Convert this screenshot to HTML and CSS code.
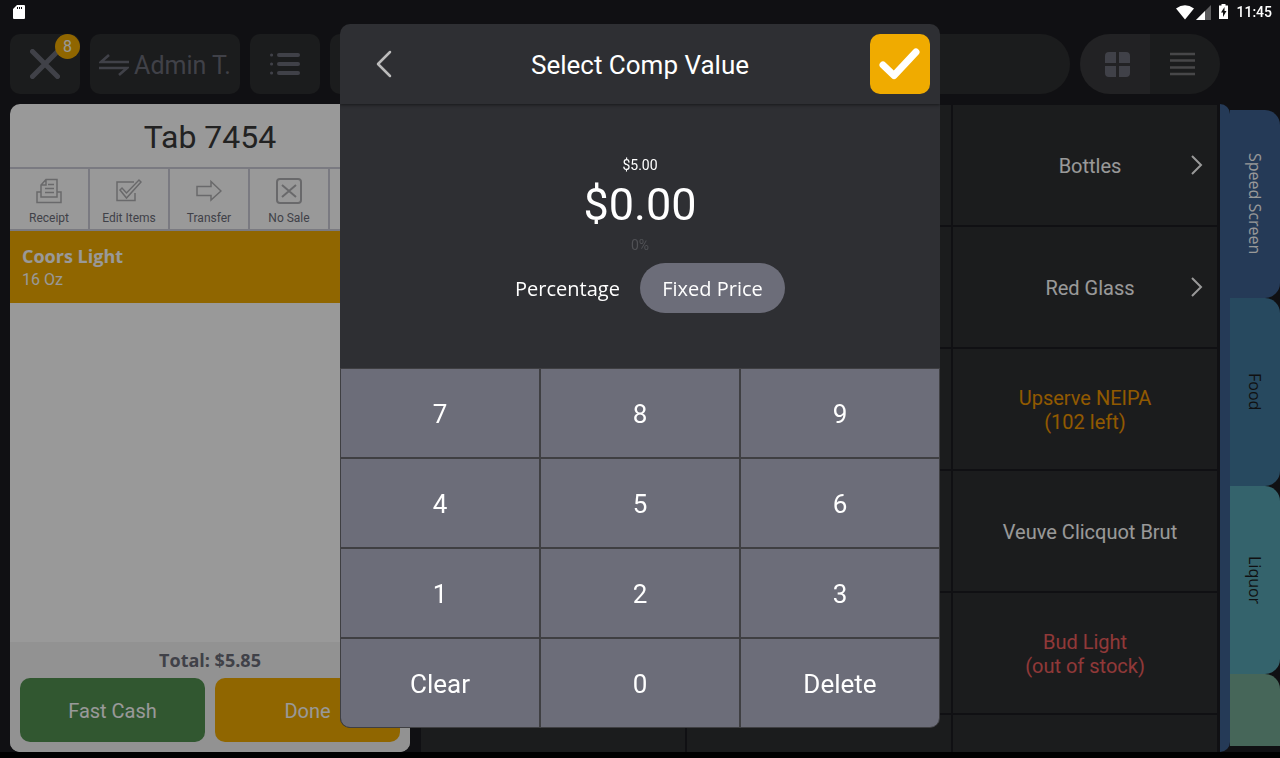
FILE: index.html
```html
<!DOCTYPE html>
<html lang="en">
<head>
    <meta charset="UTF-8">
    <meta name="viewport" content="width=device-width, initial-scale=1.0">
    <title>Tab 7454 - Select Comp Value</title>
    <link rel="stylesheet" href="styles.css">
</head>
<body>
    <div class="status-bar">
        <svg class="sd-card" width="14" height="16" viewBox="0 0 14 16"><path fill="#fff" fill-rule="evenodd" d="M5 1h7a1 1 0 0 1 1 1v12a1 1 0 0 1-1 1H2a1 1 0 0 1-1-1V5zM5 3v2h1V3zM7 3v2h1V3zM9 3v2h1V3z"/></svg>
        <div class="status-icons">
            <svg width="18" height="15" viewBox="0 0 18 15"><path fill="#fff" d="M0 3.500Q9-3 18 3.500L9 14.500z"/></svg>
            <svg width="15" height="15" viewBox="0 0 15 15"><path fill="#5c5c5e" d="M0 15 15 0v15z"/><path fill="#fff" d="M0 15 9 6v9z"/></svg>
            <svg class="battery" width="9" height="15" viewBox="0 0 9 15"><path fill="#fff" d="M2.500 0h4v1.500H9V15H0V1.500h2.500z"/><path fill="#111" d="M5.500 3 2 8.500h2V13l3.500-6h-2z"/></svg>
            <span>11:45</span>
        </div>
    </div>

    <div class="top-bar">
        <button class="bar-button close-button" aria-label="Close">
            <svg width="30" height="30" viewBox="0 0 30 30"><path d="M2.500 2.500l25 25M27.500 2.500l-25 25" stroke="currentColor" stroke-width="5" stroke-linecap="round"/></svg>
            <span class="badge">8</span>
        </button>
        <button class="bar-button user-button">
            <svg width="30" height="22" viewBox="0 0 30 22" fill="none" stroke="currentColor" stroke-width="2.500"><path d="M30 8H2l8-7M0 14h28l-8 7"/></svg>
            Admin T.
        </button>
        <button class="bar-button" aria-label="Orders">
            <svg width="30" height="24" viewBox="0 0 30 24" stroke="currentColor" stroke-width="4" stroke-linecap="round"><path d="M9 3h19M9 12h19M9 21h19"/><path stroke-width="3" d="M1.500 3h.1M1.500 12h.1M1.500 21h.1"/></svg>
        </button>
        <button class="bar-button" aria-label="Options"></button>
        <input type="search" class="search" aria-label="Search menu">
        <div class="view-toggle">
            <button class="view-button active" aria-label="Grid view">
                <svg width="25" height="25" viewBox="0 0 25 25" fill="currentColor"><path d="M11 0v11H0V4a4 4 0 0 1 4-4zM14 0h7a4 4 0 0 1 4 4v7H14zM0 14h11v11H4a4 4 0 0 1-4-4zM14 14h11v7a4 4 0 0 1-4 4h-7z"/></svg>
            </button>
            <button class="view-button" aria-label="List view">
                <svg width="25" height="24" viewBox="0 0 25 24" stroke="currentColor" stroke-width="2.500"><path d="M0 2h25M0 8.500h25M0 15.500h25M0 22h25"/></svg>
            </button>
        </div>
    </div>

    <main class="main">
        <section class="check">
            <h1>Tab 7454</h1>
            <div class="actions">
                <button>
                    <svg width="26" height="26" viewBox="0 0 26 26" fill="none" stroke="currentColor" stroke-width="1.500"><path d="M5 14H1v10.500h24V14h-4M5 19V7l5-5.500h11V19zM5 7h5V1.500M12 6.500h6M9 10.500h9M9 14.500h9"/></svg>
                    Receipt
                </button>
                <button>
                    <svg width="26" height="26" viewBox="0 0 26 26" fill="none" stroke="currentColor" stroke-width="1.500"><path d="M18 4H1v18.500h18V15"/><path d="M4 12l2-2 4.500 5L23 2l2 2-14.500 16z"/></svg>
                    Edit Items
                </button>
                <button>
                    <svg width="26" height="26" viewBox="0 0 26 26" fill="none" stroke="currentColor" stroke-width="1.500"><path d="M1 8.500h14V3.500l10 9.500-10 9v-4.500H1z"/></svg>
                    Transfer
                </button>
                <button>
                    <svg width="26" height="26" viewBox="0 0 26 26" fill="none" stroke="currentColor" stroke-width="2"><rect x="1" y="1" width="24" height="24" rx="3"/><path d="M6 7l14 12M20 7L6 19"/></svg>
                    No Sale
                </button>
                <button aria-label="More"></button>
            </div>
            <div class="item">
                <strong>Coors Light</strong>
                <span>16 Oz</span>
            </div>
            <div class="check-footer">
                <div class="total">Total: $5.85</div>
                <div class="pay-buttons">
                    <button class="pay cash">Fast Cash</button>
                    <button class="pay done">Done</button>
                </div>
            </div>
        </section>

        <section class="menu">
            <div class="tile"></div>
            <div class="tile"></div>
            <button class="tile single">Bottles
                <svg class="chevron" width="12" height="20" viewBox="0 0 12 20" fill="none" stroke="currentColor" stroke-width="2"><path d="M1 1l9 9-9 9"/></svg>
            </button>
            <div class="tile"></div>
            <div class="tile"></div>
            <button class="tile single">Red Glass
                <svg class="chevron" width="12" height="20" viewBox="0 0 12 20" fill="none" stroke="currentColor" stroke-width="2"><path d="M1 1l9 9-9 9"/></svg>
            </button>
            <div class="tile"></div>
            <div class="tile"></div>
            <button class="tile low">Upserve NEIPA<br>(102 left)</button>
            <div class="tile"></div>
            <div class="tile"></div>
            <button class="tile single">Veuve Clicquot Brut</button>
            <div class="tile"></div>
            <div class="tile"></div>
            <button class="tile out">Bud Light<br>(out of stock)</button>
            <div class="tile"></div>
            <div class="tile"></div>
            <div class="tile"></div>
        </section>

        <nav class="categories">
            <button class="category speed">Speed Screen</button>
            <button class="category food">Food</button>
            <button class="category liquor">Liquor</button>
            <button class="category more" aria-label="More categories"></button>
        </nav>
    </main>

    <div class="overlay">
        <div class="modal" role="dialog" aria-labelledby="modalTitle">
            <div class="modal-header">
                <button class="back" aria-label="Back">
                    <svg width="16" height="28" viewBox="0 0 16 28" fill="none" stroke="currentColor" stroke-width="2.500" stroke-linecap="round" stroke-linejoin="round"><path d="M14 2L2 14l12 12"/></svg>
                </button>
                <h2 id="modalTitle">Select Comp Value</h2>
                <button class="confirm" aria-label="Confirm">
                    <svg width="42" height="32" viewBox="0 0 42 32" fill="none" stroke="currentColor" stroke-width="7" stroke-linecap="round" stroke-linejoin="round"><path d="M4 17l11 10.500L37 4"/></svg>
                </button>
            </div>
            <div class="values">
                <div class="original">$5.00</div>
                <div class="amount">$0.00</div>
                <div class="percent">0%</div>
                <div class="type-toggle">
                    <button>Percentage</button>
                    <button class="selected">Fixed Price</button>
                </div>
            </div>
            <div class="keypad">
                <button>7</button>
                <button>8</button>
                <button>9</button>
                <button>4</button>
                <button>5</button>
                <button>6</button>
                <button>1</button>
                <button>2</button>
                <button>3</button>
                <button>Clear</button>
                <button>0</button>
                <button>Delete</button>
            </div>
        </div>
    </div>
</body>
</html>
```
FILE: styles.css
```css
* {
    box-sizing: border-box;
}

body {
    margin: 0;
    height: 100vh;
    display: flex;
    flex-direction: column;
    overflow: hidden;
    font-family: Roboto, sans-serif;
    background-color: #1c1c20;
    border-bottom: 6px solid #000;
    color: #fff;
}

button {
    border: none;
    padding: 0;
    font-family: inherit;
    color: inherit;
    background: none;
    cursor: pointer;
}

svg {
    display: block;
    flex-shrink: 0;
}

.status-bar {
    position: relative;
    z-index: 2;
    height: 24px;
    padding: 0 8px 0 12px;
    display: flex;
    align-items: center;
    justify-content: space-between;
    font-size: 14px;
    font-weight: 500;
}

.status-icons {
    display: flex;
    align-items: center;
    gap: 2px;
}

.status-icons .battery {
    margin: 0 6px 2px;
}

/* top bar */
.top-bar {
    display: flex;
    gap: 10px;
    padding: 10px 60px 10px 10px;
}

.bar-button {
    position: relative;
    width: 70px;
    height: 60px;
    display: flex;
    align-items: center;
    justify-content: center;
    border-radius: 10px;
    background-color: #2e2f31;
    color: #6c6d79;
}

.user-button {
    width: 150px;
    gap: 5px;
    padding-top: 2px;
    font-size: 25px;
}

.badge {
    position: absolute;
    top: 0;
    right: 0;
    width: 25px;
    height: 25px;
    border-radius: 50%;
    background-color: #f0ab00;
    color: #fff;
    font-size: 16px;
    line-height: 25px;
}

.search {
    flex: 1;
    min-width: 0;
    border: none;
    border-radius: 30px;
    background-color: #2e2f31;
}

.view-toggle {
    display: flex;
    border-radius: 30px;
    overflow: hidden;
}

.view-button {
    width: 70px;
    height: 60px;
    padding-left: 25px;
    background-color: #2e2f31;
    color: #77777a;
}

.view-button + .view-button {
    padding-left: 20px;
}

.view-button.active {
    background-color: #39393c;
    color: #6c6d79;
}

.main {
    flex: 1;
    min-height: 0;
    display: flex;
}

/* check */
.check {
    width: 400px;
    margin: 0 10px;
    display: flex;
    flex-direction: column;
    border-radius: 10px;
    overflow: hidden;
    background-color: #fff;
}

.check h1 {
    height: 63px;
    margin: 0;
    color: #3a3a3a;
    font-size: 32px;
    font-weight: 400;
    line-height: 66px;
    text-align: center;
}

.actions {
    display: flex;
    border-top: 2px solid #ccccd8;
    border-bottom: 2px solid #ccccd8;
}

.actions button {
    flex: 1;
    height: 60px;
    padding-top: 4px;
    display: flex;
    flex-direction: column;
    align-items: center;
    justify-content: center;
    gap: 7px;
    border-right: 2px solid #ccccd8;
    color: #6c6d79;
    font-size: 12px;
}

.actions svg {
    color: #b0b0b2;
}

.item {
    height: 72px;
    padding: 2px 12px 0;
    display: flex;
    flex-direction: column;
    justify-content: center;
    background-color: #f0ab00;
    font-size: 16px;
    line-height: 24px;
}

.item strong {
    font-family: "Open Sans", sans-serif;
    font-size: 18px;
}

.check-footer {
    margin-top: auto;
    padding: 0 10px 10px;
    background-color: #f4f4f4;
}

.total {
    color: #6c6d79;
    font-family: "Open Sans", sans-serif;
    font-size: 18px;
    font-weight: 700;
    line-height: 36px;
    text-align: center;
}

.pay-buttons {
    display: flex;
    gap: 10px;
}

.pay {
    flex: 1;
    height: 64px;
    padding-top: 2px;
    border-radius: 10px;
    font-size: 20px;
}

.cash {
    background-color: #529250;
}

.done {
    background-color: #f0ab00;
}

/* menu grid */
.menu {
    flex: 1;
    display: grid;
    grid-template-columns: repeat(3, 1fr);
    grid-auto-rows: 120px;
    gap: 2px;
    padding: 1px 3px 0 1px;
    overflow: hidden;
}

.tile {
    position: relative;
    padding-top: 2px;
    background-color: #2e2f31;
    font-size: 20px;
    line-height: 24px;
}

.single {
    padding-left: 10px;
}

.low {
    color: #f09600;
}

.out {
    color: #f05f5f;
}

.chevron {
    position: absolute;
    top: 50px;
    right: 14px;
}

.categories {
    width: 60px;
    position: relative;
    padding: 6px 0 6px 10px;
    display: flex;
    flex-direction: column;
}

.categories::before {
    content: "";
    position: absolute;
    top: 0;
    bottom: 0;
    left: 0;
    width: 10px;
    border-radius: 0 10px 10px 0;
    background-color: #3e6191;
}

.category {
    height: 188px;
    flex-shrink: 0;
    border-radius: 0 15px 15px 0;
    color: #1c1c20;
    font-family: "Open Sans", sans-serif;
    font-size: 16px;
    font-weight: 500;
    writing-mode: vertical-rl;
}

.speed {
    background-color: #3e6191;
    color: #fff;
}

.food {
    background-color: #417a9e;
}

.liquor {
    background-color: #58a6b4;
}

.more {
    flex: 1;
    border-bottom-right-radius: 0;
    background-color: #75aa94;
}

/* modal */
.overlay {
    position: fixed;
    inset: 0 0 6px;
    display: flex;
    align-items: center;
    justify-content: center;
    background-color: rgba(0, 0, 0, 0.4);
}

.modal {
    width: 600px;
    border-radius: 10px;
    overflow: hidden;
    background-color: #2e2f33;
}

.modal-header {
    height: 80px;
    padding: 0 10px;
    display: grid;
    grid-template-columns: 70px 1fr 70px;
    align-items: center;
    box-shadow: 0 1px 3px rgba(0, 0, 0, 0.5);
}

.modal-header h2 {
    margin: 0;
    padding-top: 2px;
    font-size: 26px;
    font-weight: 400;
    text-align: center;
}

.back {
    height: 60px;
    padding-left: 26px;
    color: #bbb;
}

.confirm {
    width: 60px;
    height: 60px;
    justify-self: end;
    display: flex;
    align-items: center;
    justify-content: center;
    border-radius: 10px;
    background-color: #f0ab00;
}

.values {
    height: 264px;
    padding-top: 51px;
    text-align: center;
}

.original, .percent {
    font-size: 14px;
    line-height: 20px;
}

.amount {
    font-size: 45px;
    line-height: 60px;
}

.percent {
    color: #505155;
}

.type-toggle {
    display: flex;
    justify-content: center;
    margin-top: 8px;
}

.type-toggle button {
    width: 145px;
    height: 50px;
    border-radius: 25px;
    font-family: "Open Sans", sans-serif;
    font-size: 20px;
}

.type-toggle .selected {
    background-color: #6c6d79;
}

.keypad {
    display: grid;
    grid-template-columns: repeat(3, 1fr);
}

.keypad button {
    height: 90px;
    padding-top: 2px;
    border: 1px solid #3f3f42;
    background-color: #6c6d79;
    font-size: 26px;
}

.keypad button:nth-child(10) {
    border-bottom-left-radius: 10px;
}

.keypad button:nth-child(12) {
    border-bottom-right-radius: 10px;
}
```
